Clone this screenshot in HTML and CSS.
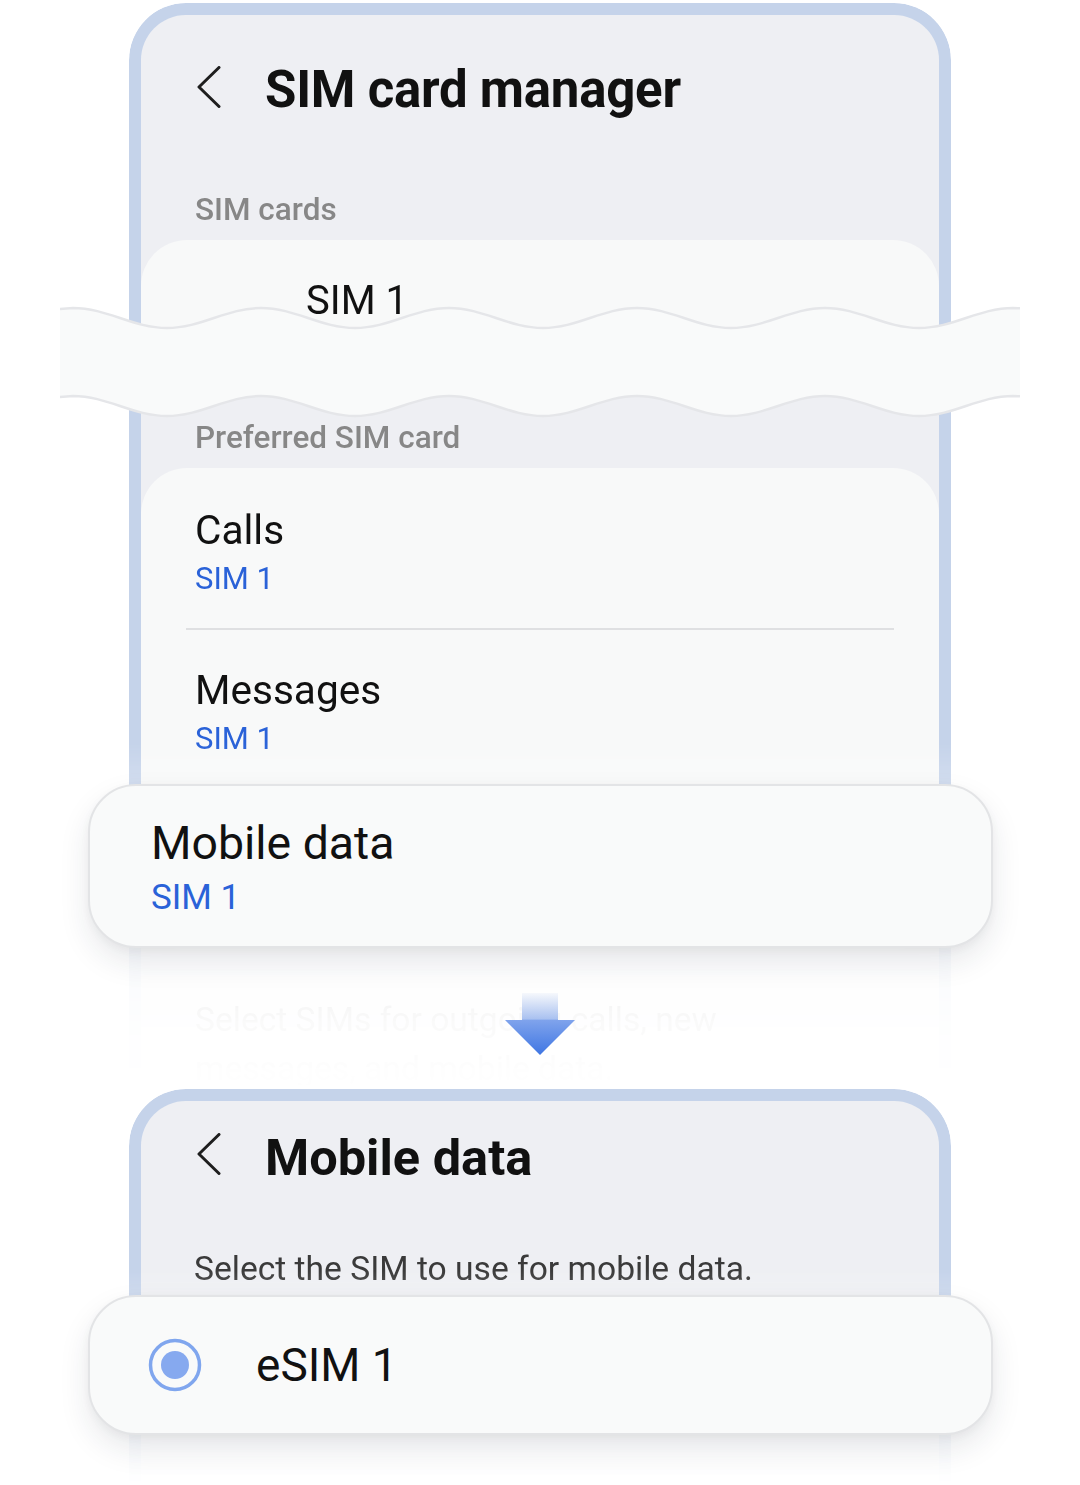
FILE: index.html
```html
<!DOCTYPE html>
<html lang="en">
<head>
<meta charset="utf-8">
<title>SIM card manager</title>
<link rel="stylesheet" href="styles.css">
</head>
<body>
<div class="stage">
  <section class="phone phone-top">
    <header class="hdr hdr-top">
      <svg class="back" width="24" height="42" viewBox="0 0 24 42"><polyline points="22,1.5 2,21 22,40.5" fill="none" stroke="#1e1e1e" stroke-width="3" stroke-linecap="round" stroke-linejoin="round"/></svg>
      <h1 class="title">SIM card manager</h1>
    </header>
    <div class="label label-sims">SIM cards</div>
    <div class="card card-sim">
      <div class="sim-name">SIM 1</div>
    </div>
    <div class="label label-pref">Preferred SIM card</div>
    <div class="card card-pref">
      <div class="row row-first">
        <div class="row-title">Calls</div>
        <div class="row-sub">SIM 1</div>
      </div>
      <div class="divider"></div>
      <div class="row row-second">
        <div class="row-title">Messages</div>
        <div class="row-sub">SIM 1</div>
      </div>
    </div>
    <p class="footnote">Select SIMs for outgoing calls, new messages, and mobile data.</p>
  </section>

  <section class="phone phone-bottom">
    <header class="hdr hdr-bottom">
      <svg class="back" width="24" height="42" viewBox="0 0 24 42"><polyline points="22,1.5 2,21 22,40.5" fill="none" stroke="#1e1e1e" stroke-width="3" stroke-linecap="round" stroke-linejoin="round"/></svg>
      <h1 class="title">Mobile data</h1>
    </header>
    <p class="desc">Select the SIM to use for mobile data.</p>
  </section>

  <svg class="wave" width="960" height="125" viewBox="0 0 960 125">
    <path fill="#f9fafa" d="M0,8.9 L13,8 C47.2,8 72.8,28 107,28 C141.2,28 166.8,8 201,8 C235.2,8 260.8,28 295,28 C329.2,28 354.8,8 389,8 C423.2,8 448.8,28 483,28 C517.2,28 542.8,8 577,8 C611.2,8 636.8,28 671,28 C705.2,28 730.8,8 765,8 C799.2,8 824.8,28 859,28 C893.2,28 918.8,8 953,8 L960,8.3 L960,96.3 L953,96 C918.8,96 893.2,116 859,116 C824.8,116 799.2,96 765,96 C730.8,96 705.2,116 671,116 C636.8,116 611.2,96 577,96 C542.8,96 517.2,116 483,116 C448.8,116 423.2,96 389,96 C354.8,96 329.2,116 295,116 C260.8,116 235.2,96 201,96 C166.8,96 141.2,116 107,116 C72.8,116 47.2,96 13,96 L0,96.9 Z"/>
    <path fill="none" stroke="#e5e6e9" stroke-width="2.5" d="M0,8.9 L13,8 C47.2,8 72.8,28 107,28 C141.2,28 166.8,8 201,8 C235.2,8 260.8,28 295,28 C329.2,28 354.8,8 389,8 C423.2,8 448.8,28 483,28 C517.2,28 542.8,8 577,8 C611.2,8 636.8,28 671,28 C705.2,28 730.8,8 765,8 C799.2,8 824.8,28 859,28 C893.2,28 918.8,8 953,8 L960,8.3"/>
    <path fill="none" stroke="#e5e6e9" stroke-width="2.5" d="M0,96.9 L13,96 C47.2,96 72.8,116 107,116 C141.2,116 166.8,96 201,96 C235.2,96 260.8,116 295,116 C329.2,116 354.8,96 389,96 C423.2,96 448.8,116 483,116 C517.2,116 542.8,96 577,96 C611.2,96 636.8,116 671,116 C705.2,116 730.8,96 765,96 C799.2,96 824.8,116 859,116 C893.2,116 918.8,96 953,96 L960,96.3"/>
  </svg>

  <div class="float-card card-md">
    <div class="md-title">Mobile data</div>
    <div class="md-sub">SIM 1</div>
  </div>

  <svg class="arrow" width="72" height="63" viewBox="0 0 72 63">
    <defs>
      <linearGradient id="ag" x1="0" y1="0" x2="0" y2="62" gradientUnits="userSpaceOnUse">
        <stop offset="0" stop-color="#f6f8fc"/>
        <stop offset="0.42" stop-color="#a9c1f0"/>
        <stop offset="0.44" stop-color="#7fa3ec"/>
        <stop offset="1" stop-color="#3f76e3"/>
      </linearGradient>
    </defs>
    <path fill="url(#ag)" d="M18,0 H54 V27 H71 L36,62 L1,27 H18 Z"/>
  </svg>

  <div class="float-card card-esim">
    <svg class="radio" width="56" height="56" viewBox="0 0 56 56">
      <circle cx="28" cy="28" r="24.5" fill="none" stroke="#80a6ee" stroke-width="3.5"/>
      <circle cx="28" cy="28" r="14" fill="#86a9ef"/>
    </svg>
    <span class="esim-name">eSIM 1</span>
  </div>
</div>
</body>
</html>
```

FILE: styles.css
```css
* { box-sizing: border-box; }

html, body {
  margin: 0;
  padding: 0;
  background: #ffffff;
}

body {
  font-family: Roboto, "Noto Sans", "Liberation Sans", sans-serif;
  color: #111111;
}

.stage {
  position: relative;
  width: 1080px;
  height: 1485px;
  overflow: hidden;
  padding-top: 3px;
}

.phone {
  margin-left: 129px;
  width: 822px;
  border: 12px solid #c5d3ea;
  border-bottom: 0;
  border-radius: 57px 57px 0 0;
  background: #eeeff3;
  overflow: hidden;
}

.phone-top {
  height: 1086px;
  -webkit-mask-image: linear-gradient(to bottom, #000 0, #000 740px, rgba(0,0,0,0.35) 860px, rgba(0,0,0,0.1) 960px, rgba(0,0,0,0.03) 1020px, rgba(0,0,0,0) 1086px);
  mask-image: linear-gradient(to bottom, #000 0, #000 740px, rgba(0,0,0,0.35) 860px, rgba(0,0,0,0.1) 960px, rgba(0,0,0,0.03) 1020px, rgba(0,0,0,0) 1086px);
}

.phone-bottom {
  height: 396px;
  -webkit-mask-image: linear-gradient(to bottom, #000 0, #000 180px, rgba(0,0,0,0.45) 260px, rgba(0,0,0,0.12) 350px, rgba(0,0,0,0) 396px);
  mask-image: linear-gradient(to bottom, #000 0, #000 180px, rgba(0,0,0,0.45) 260px, rgba(0,0,0,0.12) 350px, rgba(0,0,0,0) 396px);
}

.hdr {
  display: flex;
  align-items: flex-start;
  height: 60px;
}

.hdr-top { margin-top: 45px; }
.hdr-bottom { margin-top: 27px; }

.back {
  flex: none;
  margin-left: 56px;
  margin-top: 6px;
}

.hdr-bottom .back { margin-top: 5px; }

.title {
  margin: 0 0 0 44px;
  font-size: 51px;
  line-height: 60px;
  font-weight: 700;
  color: #111111;
  letter-spacing: -0.25px;
}

.hdr-bottom .title {
  font-size: 50.5px;
  letter-spacing: 0;
}

.label {
  padding-left: 54px;
  font-size: 31.5px;
  line-height: 36px;
  font-weight: 500;
  color: #878787;
}

.label-sims { margin-top: 72px; }
.label-pref { margin-top: 60px; }

.card {
  background: #f8f9f9;
  border-radius: 46px;
}

.card-sim {
  margin-top: 12px;
  height: 120px;
  padding: 37px 0 0 165px;
  border-radius: 46px 46px 0 0;
}

.sim-name {
  font-size: 40px;
  line-height: 48px;
  color: #111111;
}

.card-pref {
  margin-top: 12px;
}

.row {
  padding: 38px 54px 30px;
}

.row-second {
  padding-top: 36px;
  padding-bottom: 192px;
}

.row-title {
  font-size: 40.6px;
  line-height: 48px;
  color: #111111;
}

.row-sub {
  margin-top: 6px;
  font-size: 31px;
  line-height: 38px;
  color: #2a62d8;
}

.divider {
  height: 2px;
  margin: 0 45px;
  background: #dfe0e2;
}

.footnote {
  margin: 45px 0 0;
  padding: 0 70px 0 54px;
  font-size: 33.6px;
  line-height: 49px;
  color: #555555;
}

.desc {
  margin: 61px 0 0;
  padding-left: 53px;
  font-size: 33.6px;
  line-height: 40px;
  color: #3a3a3a;
}

.wave {
  position: absolute;
  left: 60px;
  top: 300px;
}

.float-card {
  position: absolute;
  left: 88px;
  width: 905px;
  background: #f9fafa;
  border: 2px solid #e3e4e6;
  border-radius: 48px;
  box-shadow: 0 14px 30px rgba(30, 40, 60, 0.10), 0 3px 8px rgba(0, 0, 0, 0.04);
}

.card-md {
  top: 784px;
  height: 164px;
  padding: 30px 0 0 61px;
}

.md-title {
  font-size: 46.4px;
  line-height: 54px;
  color: #111111;
}

.md-sub {
  margin-top: 7px;
  font-size: 35px;
  line-height: 42px;
  color: #2a62d8;
}

.arrow {
  position: absolute;
  left: 504px;
  top: 993px;
}

.card-esim {
  top: 1295px;
  height: 140px;
  display: flex;
  align-items: center;
  padding-left: 57px;
}

.radio { flex: none; }

.esim-name {
  margin-left: 53px;
  font-size: 46px;
  line-height: 54px;
  color: #111111;
}
```
